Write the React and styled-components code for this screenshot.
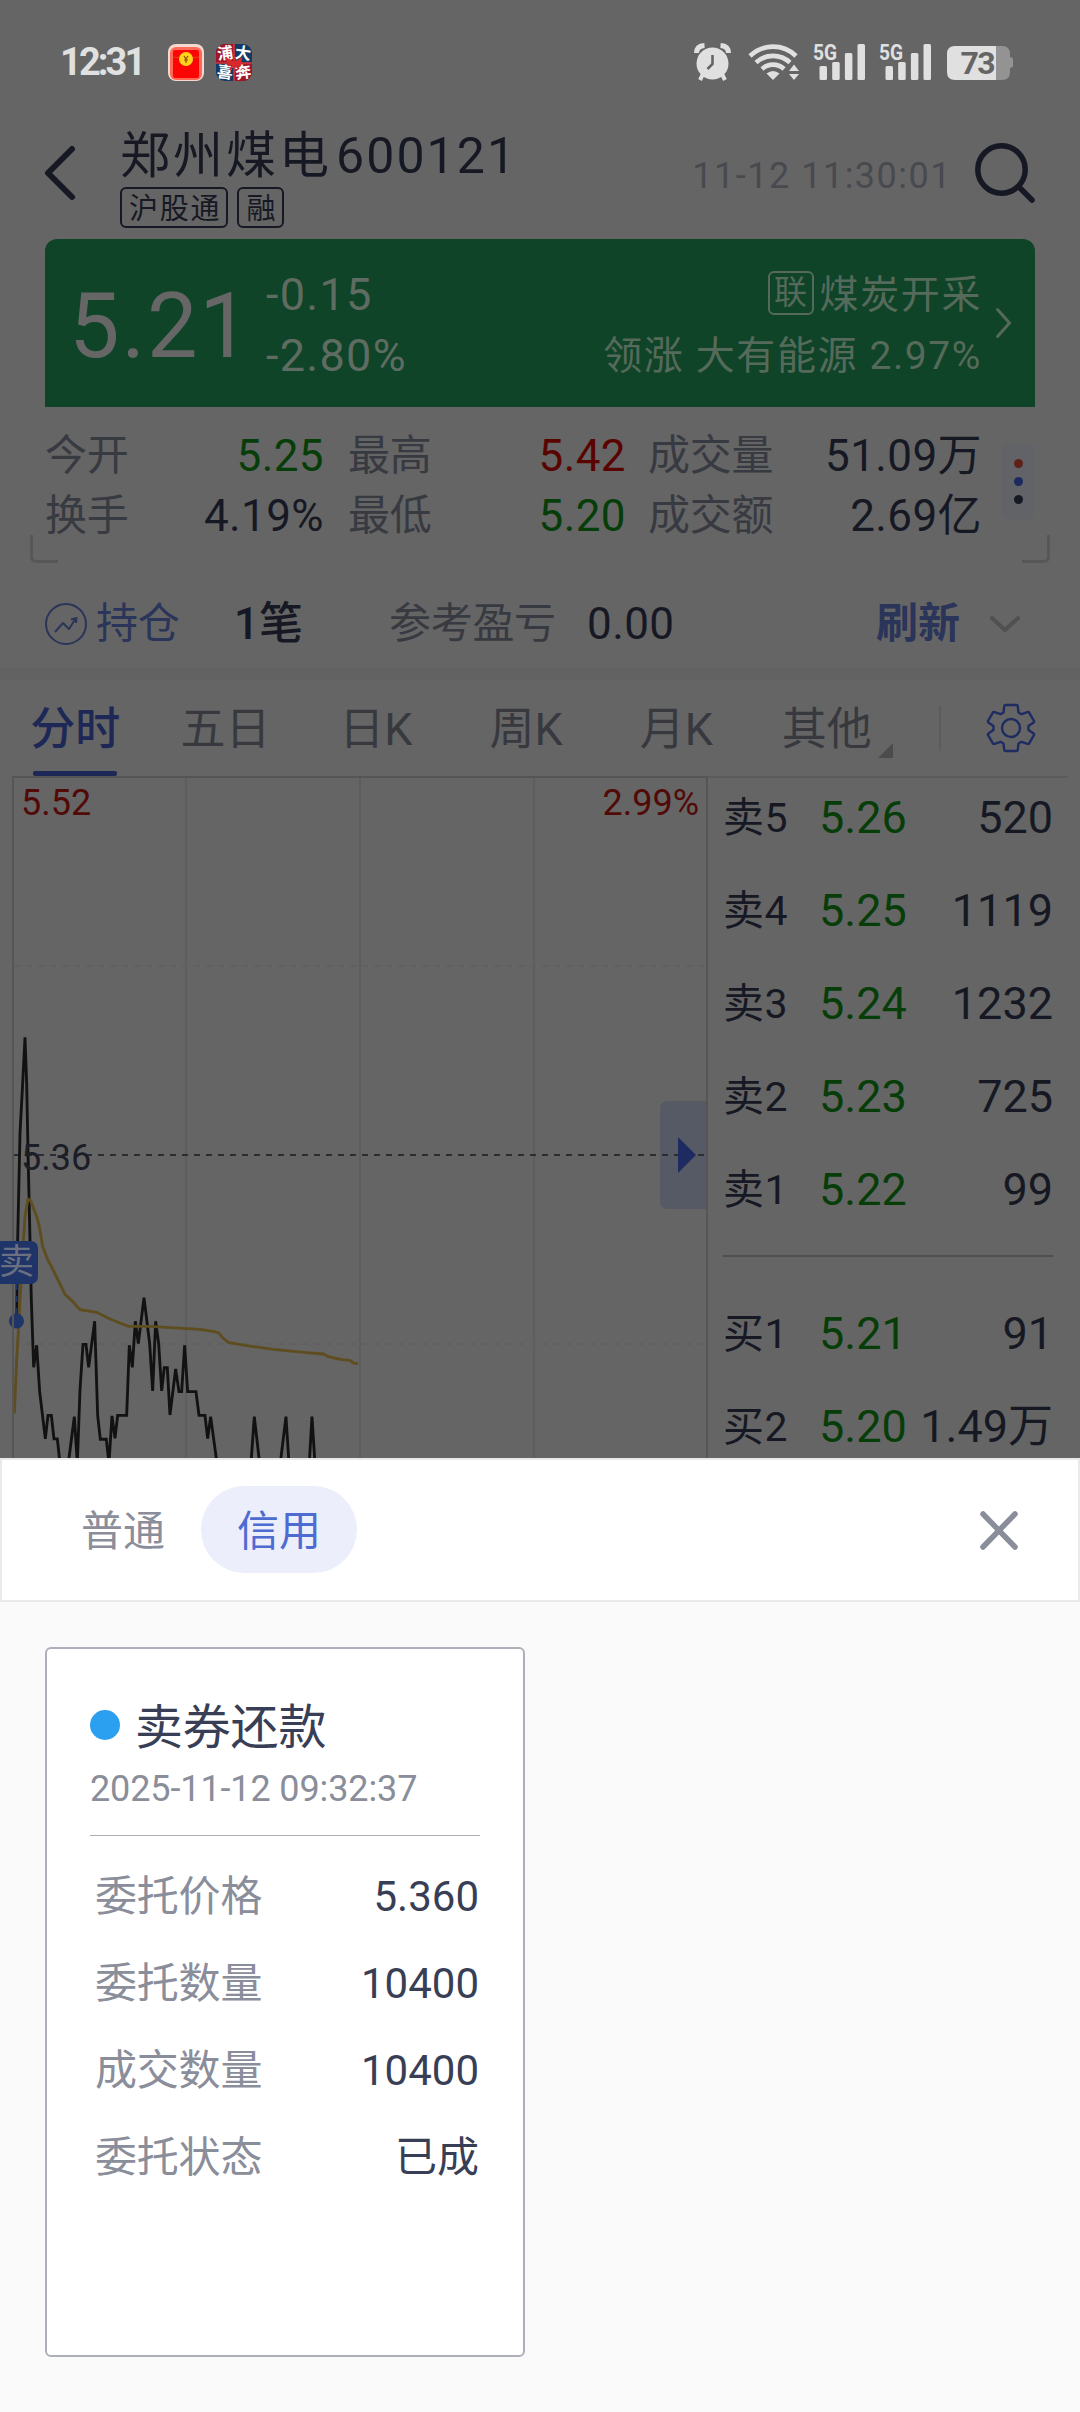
import React, { useState } from "react";
import styled, { createGlobalStyle } from "styled-components";

const GlobalStyle = createGlobalStyle`
    * {
        box-sizing: border-box;
    }

    body {
        margin: 0;
        background: #fafafa;
        font-family: Roboto, "Noto Sans CJK SC", sans-serif;
    }
`;

const Page = styled.div`
    width: 1080px;
    height: 2412px;
    overflow: hidden;
    display: flex;
    flex-direction: column;
    white-space: nowrap;
`;

const Quote = styled.div`
    height: 1458px;
    flex: none;
    overflow: hidden;
    background: #656565;
    color: #161923;
`;

const Svg = styled.svg`
    display: block;
    flex: none;
    overflow: visible;
`;

const StatusBar = styled.div`
    height: 124px;
    padding: 0 67px 0 60px;
    display: flex;
    align-items: center;
    justify-content: space-between;
    color: #e0e0e0;
`;

const StatusGroup = styled.div`
    display: flex;
    align-items: center;
`;

const Clock = styled.div`
    width: 108px;
    font-size: 38px;
    font-weight: 700;
    line-height: 44px;
    letter-spacing: -2.9px;
`;

const AppIcons = styled.div`
    display: flex;
    gap: 12px;
`;

const Header = styled.div`
    height: 115px;
    padding: 0 45px;
    display: flex;
`;

const BackIcon = styled(Svg)`
    margin: 22px 45px 0 0;
`;

const StockInfo = styled.div`
    flex: 1;
`;

const StockName = styled.div`
    display: flex;
    gap: 4px;
    font-size: 50px;
    line-height: 64px;
    height: 62px;
    letter-spacing: 2.1px;
`;

const NameText = styled.span`
    letter-spacing: 3px;
`;

const Tags = styled.div`
    display: flex;
    gap: 9px;
    margin-top: 1px;
`;

const Tag = styled.span`
    height: 41px;
    padding: 0 5px 0 7px;
    border: 2px solid #161923;
    border-radius: 6px;
    font-size: 29px;
    line-height: 40px;
    letter-spacing: 1.8px;
`;

const QuoteTime = styled.div`
    margin: 31px 23px 0 0;
    color: #484a4f;
    font-size: 36px;
    line-height: 42px;
    letter-spacing: 1.5px;
`;

const SearchIcon = styled(Svg)`
    margin-top: 19px;
`;

const Banner = styled.div`
    height: 168px;
    margin: 0 45px;
    padding: 0 24px;
    display: flex;
    align-items: center;
    border-radius: 12px 12px 0 0;
    background: #0f4428;
    color: #666666;
`;

const Price = styled.div`
    width: 197px;
    margin-top: 7px;
    font-size: 90px;
    line-height: 100px;
    letter-spacing: 1.8px;
`;

const Change = styled.div`
    flex: 1;
    margin-top: 4px;
    color: #5f6c62;
    font-size: 45px;
    line-height: 61px;
    letter-spacing: 1.3px;
`;

const Industry = styled.div`
    margin: 5px 14px 0 0;
    display: flex;
    flex-direction: column;
    align-items: flex-end;
    color: #566a5b;
    font-size: 39px;
    line-height: 61px;
    letter-spacing: 1.6px;
`;

const IndustryName = styled.div`
    display: flex;
    align-items: center;
    gap: 6px;
`;

const LinkTag = styled.span`
    width: 46px;
    height: 44px;
    margin-top: -4px;
    border: 2px solid #566a5b;
    border-radius: 6px;
    font-size: 33px;
    line-height: 40px;
    letter-spacing: 0;
    text-align: center;
`;

const Stats = styled.div`
    position: relative;
    height: 173px;
    padding: 19px 45px 0;
    display: flex;
`;

const StatGrid = styled.div`
    width: 936px;
    flex: none;
    display: grid;
    grid-template-columns: 303px 300px 333px;
    grid-auto-rows: 60px;
`;

const Stat = styled.div`
    width: ${(props) => props.width}px;
    display: flex;
    justify-content: space-between;
    line-height: 60px;
`;

const Label = styled.span`
    color: #383a41;
    font-size: 42px;
    letter-spacing: -0.3px;
`;

const Value = styled.span`
    color: ${(props) => props.color || "#161923"};
    font-size: 44px;
    letter-spacing: 0.4px;
`;

const MoreButton = styled.div`
    width: 33px;
    height: 75px;
    margin: 18px 0 0 21px;
    display: flex;
    flex-direction: column;
    align-items: center;
    justify-content: center;
    gap: 9px;
    border-radius: 6px;
    background: #616367;
`;

const Dot = styled.i`
    width: 9px;
    height: 9px;
    border-radius: 50%;
    background: ${(props) => props.color};
`;

const Corner = styled.i`
    position: absolute;
    bottom: 17px;
    width: 28px;
    height: 28px;
    border: solid #575757;
`;

const LeftCorner = styled(Corner)`
    left: 30px;
    border-width: 0 0 3px 3px;
    border-bottom-left-radius: 6px;
`;

const RightCorner = styled(Corner)`
    right: 30px;
    border-width: 0 3px 3px 0;
    border-bottom-right-radius: 6px;
`;

const Position = styled.div`
    height: 100px;
    padding: 0 60px 0 45px;
    display: flex;
    align-items: center;
    border-bottom: 12px solid #626262;
    font-size: 42px;
    line-height: 62px;
`;

const PositionLink = styled.span`
    margin-left: 9px;
    width: 138px;
    color: #2b3459;
    letter-spacing: -0.3px;
`;

const PositionCount = styled.span`
    width: 155px;
    font-size: 44px;
    font-weight: 500;
`;

const PositionLabel = styled(Label)`
    width: 198px;
`;

const Refresh = styled.span`
    margin: 0 30px 0 auto;
    color: #2b3459;
    font-weight: 700;
`;

const TabBar = styled.div`
    height: 96px;
    padding-right: 45px;
    display: flex;
    align-items: center;
`;

const Tab = styled.div`
    position: relative;
    width: 150.5px;
    height: 96px;
    color: ${(props) => (props.active ? "#1d2856" : "#37393f")};
    font-size: 45px;
    font-weight: ${(props) => (props.active ? 500 : 400)};
    line-height: 100px;
    text-align: center;
    cursor: pointer;

    &::after {
        content: "";
        display: ${(props) => (props.active ? "block" : "none")};
        position: absolute;
        left: 33px;
        bottom: 0;
        width: 84px;
        height: 5px;
        border-radius: 2px;
        background: #1d2856;
    }
`;

const Triangle = styled.i`
    position: absolute;
    right: 9px;
    bottom: 18px;
    border-style: solid;
    border-width: 0 0 15px 15px;
    border-color: transparent transparent #4c4c4c transparent;
`;

const Separator = styled.i`
    width: 2px;
    height: 45px;
    margin: 0 46px 0 37px;
    background: #5c5c5c;
`;

const Market = styled.div`
    height: 682px;
    display: flex;
`;

const Chart = styled.div`
    position: relative;
    width: 708px;
    height: 682px;
`;

const ChartLabel = styled.span`
    position: absolute;
    font-size: 36px;
    line-height: 42px;
    color: ${(props) => props.color};
`;

const TopLeftLabel = styled(ChartLabel)`
    left: 21px;
    top: 6px;
`;

const TopRightLabel = styled(ChartLabel)`
    right: 9px;
    top: 6px;
`;

const MiddleLabel = styled(ChartLabel)`
    left: 21px;
    top: 361px;
`;

const SellBadge = styled.span`
    position: absolute;
    left: -6px;
    top: 465px;
    width: 44px;
    height: 43px;
    padding-left: 5px;
    border-radius: 7px;
    background: #1f3468;
    color: #6a7081;
    font-size: 35px;
    line-height: 44px;
`;

const OrderBook = styled.div`
    flex: 1;
    margin-right: 12px;
    padding: 0 15px;
    border-top: 2px solid #5b5b5b;
`;

const Orders = styled.div`
    display: grid;
    gap: 15px;
`;

const Order = styled.div`
    display: flex;
    height: 78px;
    line-height: 80px;
    font-size: 45px;
`;

const OrderSide = styled.span`
    width: 96px;
    font-size: 41px;
    letter-spacing: 0.5px;
`;

const OrderPrice = styled.span`
    flex: 1;
    color: #073d09;
`;

const BookDivider = styled.div`
    height: 2px;
    margin: 27px 0 37px;
    background: #4f4f4f;
`;

const Sheet = styled.div`
    flex: 1;
    background: #fafafa;
`;

const SheetHeader = styled.div`
    height: 144px;
    padding: 0 60px 0 47px;
    display: flex;
    align-items: center;
    border: 2px solid #e9e9e9;
    background: #ffffff;
`;

const SheetTab = styled.div`
    height: 87px;
    margin: -1px 4px 0 0;
    padding: 0 ${(props) => (props.active ? 36 : 32)}px;
    border-radius: 44px;
    background: ${(props) => (props.active ? "#eceefb" : "transparent")};
    color: ${(props) => (props.active ? "#4d6bd0" : "#8a8d9a")};
    font-size: 42px;
    line-height: 92px;
    cursor: pointer;
`;

const CloseIcon = styled(Svg)`
    margin-left: auto;
    cursor: pointer;
`;

const Card = styled.div`
    width: 480px;
    height: 710px;
    margin: 45px 0 0 45px;
    padding: 44px 43px 0;
    border: 2px solid #adb0b8;
    border-radius: 6px;
    background: #ffffff;
`;

const CardTitle = styled.div`
    display: flex;
    align-items: center;
    gap: 15px;
    color: #383e55;
    font-size: 48px;
    line-height: 70px;
    letter-spacing: -0.2px;
`;

const TradeDot = styled.i`
    width: 30px;
    height: 30px;
    margin-top: -6px;
    border-radius: 50%;
    background: #2ba0f0;
`;

const TradeTime = styled.div`
    height: 73px;
    border-bottom: 1px solid #acaeb5;
    color: #8a8d9a;
    font-size: 36px;
    line-height: 52px;
    letter-spacing: -0.12px;
`;

const TradeFields = styled.div`
    padding: 17px 1px 0 5px;
`;

const TradeField = styled.div`
    display: flex;
    justify-content: space-between;
    color: #383e55;
    font-size: 42px;
    line-height: 88px;
    height: 87px;
`;

const FieldLabel = styled.span`
    color: #8a8d9a;
    letter-spacing: -0.2px;
`;

const stats = [
    { label: "今开", value: "5.25", color: "#073d09", width: 279 },
    { label: "最高", value: "5.42", color: "#5a0402", width: 278 },
    { label: "成交量", value: "51.09万", width: 334 },
    { label: "换手", value: "4.19%", width: 279 },
    { label: "最低", value: "5.20", color: "#073d09", width: 278 },
    { label: "成交额", value: "2.69亿", width: 334 },
];

const tabs = ["分时", "五日", "日K", "周K", "月K", "其他"];

const asks = [
    ["卖5", "5.26", "520"],
    ["卖4", "5.25", "1119"],
    ["卖3", "5.24", "1232"],
    ["卖2", "5.23", "725"],
    ["卖1", "5.22", "99"],
];

const bids = [
    ["买1", "5.21", "91"],
    ["买2", "5.20", "1.49万"],
];

const fields = [
    ["委托价格", "5.360"],
    ["委托数量", "10400"],
    ["成交数量", "10400"],
    ["委托状态", "已成"],
];

// both series are in thirds of a pixel
const pricePoints =
    "50,960 53,720 60,400 68,250 75,112 80,250 85,500 90,720 94,900 101,1102 110,1036 119,1175 136,1317 144,1246 154,1246 162,1317 172,1317 180,1390 190,1460 205,1390 223,1250 232,1390 240,1170 249,1033 258,1033 266,1102 284,964 293,1246 301,1318 319,1318 327,1390 336,1248 345,1315 353,1246 380,1246 388,1036 397,1102 406,964 415,1031 432,893 449,1031 458,1173 467,964 476,1031 485,1173 493,1103 502,1103 510,1245 527,1107 537,1175 545,1175 554,1036 563,1175 588,1175 597,1246 615,1246 623,1316 632,1250 651,1390 660,1460 745,1460 753,1390 763,1250 780,1400 790,1460 832,1460 841,1390 858,1250 867,1390 875,1460 920,1460 928,1390 936,1250 945,1390 950,1460";

const averagePoints =
    "43,1240 50,1080 58,940 66,790 75,650 84,597 92,602 112,655 119,685 128,740 145,783 152,795 175,842 195,883 222,908 230,919 240,929 290,937 330,957 385,979 450,979 600,988 640,994 657,999 667,1013 685,1027 740,1037 820,1048 920,1058 970,1062 985,1070 1025,1079 1050,1081 1060,1089 1074,1091";

const PacketIcon = () => (
    <Svg width="36" height="37" viewBox="0 0 36 37">
        <rect width="36" height="37" rx="8" fill="#f3d9d0" />
        <rect x="2" y="3" width="32" height="33" rx="6" fill="#ff6a58" />
        <rect x="5" y="6" width="26" height="28" rx="2" fill="#fb0505" />
        <path d="M5 13q13 3 26 0" stroke="#d9480f" fill="none" />
        <circle cx="18" cy="15" r="7" fill="#ffd21c" />
        <path
            d="M16 12l2 3 2-3M18 15v4M16 16h4"
            stroke="#8a4a00"
            strokeWidth="1.2"
            fill="none"
        />
    </Svg>
);

const GiftIcon = () => (
    <Svg width="36" height="37" viewBox="0 0 36 37">
        <clipPath id="gift">
            <rect width="36" height="37" rx="9" />
        </clipPath>
        <g clipPath="url(#gift)">
            <rect width="36" height="37" fill="#123a66" />
            <path d="M0 0h18v19h18v18H18V19H0z" fill="#a01528" />
            <g fill="#ffffff" fontSize="16" fontWeight="700">
                <text x="1" y="15" transform="rotate(-8 9 9)">
                    浦
                </text>
                <text x="19" y="15" transform="rotate(8 27 9)">
                    大
                </text>
                <text x="1" y="34" transform="rotate(8 9 28)">
                    喜
                </text>
                <text x="19" y="34" transform="rotate(-8 27 28)">
                    奔
                </text>
            </g>
            <path d="M18 0v37M0 19h36" stroke="#d8343c" strokeWidth="1.6" />
            <path
                d="M18 19l-7-4 2 6zM18 19l7-4-1 6zM18 19l-4 7M18 19l5 6M18 18l1-4"
                fill="#d82a2a"
                stroke="#d82a2a"
                strokeWidth="2"
            />
        </g>
    </Svg>
);

const SignalIcon = () => (
    <Svg width="51" height="38" viewBox="0 0 51 38" fill="#e0e0e0">
        <text
            x="-1"
            y="16.5"
            fontSize="22"
            fontWeight="700"
            textLength="24"
            lengthAdjust="spacingAndGlyphs"
        >
            5G
        </text>
        <rect x="5.5" y="23" width="7.5" height="14" rx="1.5" />
        <rect x="18.2" y="19" width="7.5" height="18" rx="1.5" />
        <rect x="30.9" y="10" width="7.5" height="27" rx="1.5" />
        <rect x="43.5" y="1" width="7.5" height="36" rx="1.5" />
    </Svg>
);

const StatusIcons = () => (
    <Svg width="319" height="38" viewBox="694 43 319 38" fill="#e0e0e0">
        <g>
            <circle cx="712.5" cy="63.5" r="16" />
            <path
                d="M696.5 53q0-7 8-7.500M728.500 53q0-7-8-7.500"
                fill="none"
                stroke="#e0e0e0"
                strokeWidth="5"
            />
            <path
                d="M703 74l-3 6M722 74l3 6"
                stroke="#e0e0e0"
                strokeWidth="4"
            />
            <path
                d="M712.500 55v9l-5 5"
                fill="none"
                stroke="#656565"
                strokeWidth="2.600"
            />
        </g>
        <g fill="none" stroke="#e0e0e0" strokeWidth="4.600">
            <path d="M750 56a33 33 0 0 1 46 0" />
            <path d="M756 62.500a25 25 0 0 1 34 0" />
            <path d="M762 69a16 16 0 0 1 22 0" />
        </g>
        <path d="M766.500 73.500q6.500-5 13 0L773 80z" />
        <path d="M789 71l5-6.500 5 6.500zM789 74h10l-5 6z" />
        <svg x="814" y="43" width="51" height="38" overflow="visible">
            <SignalIcon />
        </svg>
        <svg x="880" y="43" width="51" height="38" overflow="visible">
            <SignalIcon />
        </svg>
        <path
            d="M996 46h6q8 0 8 8v3q3 0 3 3v5q0 3-3 3v4q0 8-8 8h-6z"
            fill="#939393"
        />
        <path d="M955 46h41v34h-41q-8 0-8-8v-18q0-8 8-8z" />
        <text
            x="960.500"
            y="74"
            fill="#656565"
            fontSize="32"
            fontWeight="700"
            textLength="35"
        >
            73
        </text>
    </Svg>
);

const GearIcon = () => (
    <Svg
        width="48"
        height="48"
        viewBox="0 0 48 48"
        fill="none"
        stroke="#1f2c62"
        strokeWidth="2.400"
        strokeLinejoin="round"
    >
        <path d="M18.500 1h11q1 0 1.200 1l.8 6.500 3 1.700 6-2q1.200-.4 1.800.6l4.600 8q.5 1-.3 1.700L41.500 22v4l5.100 3.500q.8.700.3 1.700l-4.600 8q-.6 1-1.800.6l-6-2-3 1.700-.8 6.500q-.2 1-1.200 1h-11q-1 0-1.200-1l-.8-6.500-3-1.700-6 2q-1.200.4-1.800-.6l-4.600-8q-.5-1 .3-1.700L6.500 26v-4l-5.100-3.500q-.8-.7-.3-1.700l4.600-8q.6-1 1.800-.6l6 2 3-1.700.8-6.500q.2-1 1.200-1z" />
        <circle cx="24" cy="24" r="9" />
    </Svg>
);

const TimeChart = () => (
    <Svg width="708" height="682" viewBox="0 0 708 682" fill="none">
        <path
            d="M186 2v680M360 2v680M534 2v680"
            stroke="#5d5d5d"
            strokeWidth="2"
        />
        <path
            d="M14 190h692M14 568h692"
            stroke="#606060"
            strokeWidth="2"
            strokeDasharray="6 6"
        />
        <path
            d="M668 325h40v108h-40q-8 0-8-8v-92q0-8 8-8z"
            fill="#565a65"
        />
        <path
            d="M14 379h690"
            stroke="#2b2d33"
            strokeWidth="2"
            strokeDasharray="6 6"
        />
        <path d="M678 361l18 18-18 18z" fill="#1e2b60" />
        <g transform="translate(0 224) scale(0.3333)" strokeWidth="8.500">
            <polyline points={pricePoints} stroke="#121212" />
            <polyline points={averagePoints} stroke="#5d4d1f" />
        </g>
        <path
            d="M16.500 508v30"
            stroke="#1f3468"
            strokeWidth="2"
            strokeDasharray="6 6"
        />
        <circle cx="16.500" cy="545" r="7.500" fill="#1f3468" />
        <path
            d="M13 682V1h694v681"
            stroke="#555555"
            strokeWidth="2"
        />
    </Svg>
);

const OrderRow = ({ order }) => (
    <Order>
        <OrderSide>{order[0]}</OrderSide>
        <OrderPrice>{order[1]}</OrderPrice>
        <span>{order[2]}</span>
    </Order>
);

const App = () => {
    const [tab, setTab] = useState("分时");
    const [account, setAccount] = useState("信用");

    return (
        <>
            <GlobalStyle />
            <Page>
                <Quote>
                    <StatusBar>
                        <StatusGroup>
                            <Clock>12:31</Clock>
                            <AppIcons>
                                <PacketIcon />
                                <GiftIcon />
                            </AppIcons>
                        </StatusGroup>
                        <StatusIcons />
                    </StatusBar>
                    <Header>
                        <BackIcon width="30" height="54" viewBox="0 0 30 54">
                            <path
                                d="M27 3L3 27l24 24"
                                fill="none"
                                stroke="#161923"
                                strokeWidth="6"
                                strokeLinecap="round"
                                strokeLinejoin="round"
                            />
                        </BackIcon>
                        <StockInfo>
                            <StockName>
                                <NameText>郑州煤电</NameText>
                                <span>600121</span>
                            </StockName>
                            <Tags>
                                <Tag>沪股通</Tag>
                                <Tag>融</Tag>
                            </Tags>
                        </StockInfo>
                        <QuoteTime>11-12 11:30:01</QuoteTime>
                        <SearchIcon width="60" height="60" viewBox="0 0 60 60">
                            <g
                                fill="none"
                                stroke="#161923"
                                strokeWidth="5.500"
                                strokeLinecap="round"
                            >
                                <circle cx="26.500" cy="26.500" r="23.700" />
                                <path d="M44 44l13 13" />
                            </g>
                        </SearchIcon>
                    </Header>
                    <Banner>
                        <Price>5.21</Price>
                        <Change>
                            <div>-0.15</div>
                            <div>-2.80%</div>
                        </Change>
                        <Industry>
                            <IndustryName>
                                <LinkTag>联</LinkTag>
                                煤炭开采
                            </IndustryName>
                            <div>领涨 大有能源 2.97%</div>
                        </Industry>
                        <Svg width="15" height="30" viewBox="0 0 15 30">
                            <path
                                d="M1.500 1.500L13.500 15l-12 13.500"
                                fill="none"
                                stroke="#566a5b"
                                strokeWidth="3"
                                strokeLinecap="round"
                            />
                        </Svg>
                    </Banner>
                    <Stats>
                        <StatGrid>
                            {stats.map((stat) => (
                                <Stat key={stat.label} width={stat.width}>
                                    <Label>{stat.label}</Label>
                                    <Value color={stat.color}>
                                        {stat.value}
                                    </Value>
                                </Stat>
                            ))}
                        </StatGrid>
                        <MoreButton>
                            <Dot color="#5e2018" />
                            <Dot color="#1c2a60" />
                            <Dot color="#161923" />
                        </MoreButton>
                        <LeftCorner />
                        <RightCorner />
                    </Stats>
                    <Position>
                        <Svg
                            width="42"
                            height="42"
                            viewBox="0 0 42 42"
                            fill="none"
                            stroke="#2b3459"
                            strokeWidth="2"
                        >
                            <circle cx="21" cy="21" r="20" />
                            <path
                                d="M10 29l8-9 6 6 7-11M26 16.500l5.500-1.500-.5 5"
                                strokeLinejoin="round"
                            />
                        </Svg>
                        <PositionLink>持仓</PositionLink>
                        <PositionCount>1笔</PositionCount>
                        <PositionLabel>参考盈亏</PositionLabel>
                        <Value>0.00</Value>
                        <Refresh>刷新</Refresh>
                        <Svg width="30" height="16" viewBox="0 0 30 16">
                            <path
                                d="M2 2l13 12L28 2"
                                fill="none"
                                stroke="#505050"
                                strokeWidth="4"
                                strokeLinecap="round"
                                strokeLinejoin="round"
                            />
                        </Svg>
                    </Position>
                    <TabBar>
                        {tabs.map((name) => (
                            <Tab
                                key={name}
                                active={name === tab ? 1 : 0}
                                onClick={() => setTab(name)}
                            >
                                {name}
                                {name === "其他" && <Triangle />}
                            </Tab>
                        ))}
                        <Separator />
                        <GearIcon />
                    </TabBar>
                    <Market>
                        <Chart>
                            <TimeChart />
                            <TopLeftLabel color="#520a08">5.52</TopLeftLabel>
                            <TopRightLabel color="#520a08">2.99%</TopRightLabel>
                            <MiddleLabel color="#1b1d27">5.36</MiddleLabel>
                            <SellBadge>卖</SellBadge>
                        </Chart>
                        <OrderBook>
                            <Orders>
                                {asks.map((order) => (
                                    <OrderRow key={order[0]} order={order} />
                                ))}
                            </Orders>
                            <BookDivider />
                            <Orders>
                                {bids.map((order) => (
                                    <OrderRow key={order[0]} order={order} />
                                ))}
                            </Orders>
                        </OrderBook>
                    </Market>
                </Quote>
                <Sheet>
                    <SheetHeader>
                        {["普通", "信用"].map((name) => (
                            <SheetTab
                                key={name}
                                active={name === account ? 1 : 0}
                                onClick={() => setAccount(name)}
                            >
                                {name}
                            </SheetTab>
                        ))}
                        <CloseIcon width="38" height="39" viewBox="0 0 38 39">
                            <path
                                d="M3 3l32 33M35 3L3 36"
                                stroke="#8a8d9a"
                                strokeWidth="5.500"
                                strokeLinecap="round"
                            />
                        </CloseIcon>
                    </SheetHeader>
                    <Card>
                        <CardTitle>
                            <TradeDot />
                            卖券还款
                        </CardTitle>
                        <TradeTime>2025-11-12 09:32:37</TradeTime>
                        <TradeFields>
                            {fields.map(([label, value]) => (
                                <TradeField key={label}>
                                    <FieldLabel>{label}</FieldLabel>
                                    <span>{value}</span>
                                </TradeField>
                            ))}
                        </TradeFields>
                    </Card>
                </Sheet>
            </Page>
        </>
    );
};

export default App;
